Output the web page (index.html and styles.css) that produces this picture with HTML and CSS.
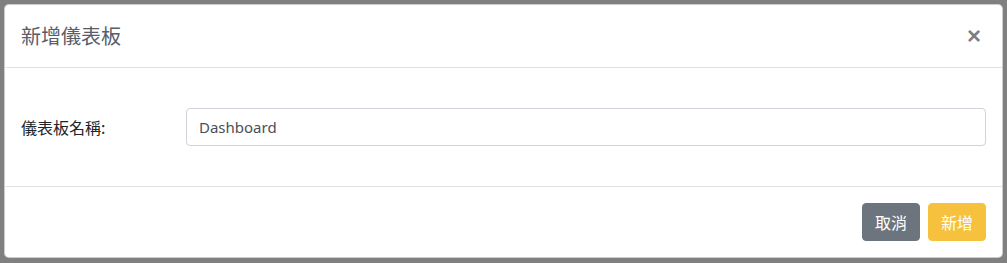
FILE: index.html
```html
<!DOCTYPE html>
<html lang="zh-Hant">
<head>
<meta charset="utf-8">
<title>新增儀表板</title>
<link rel="stylesheet" href="styles.css">
</head>
<body>
<div class="backdrop">
  <div class="modal">
    <div class="modal-header">
      <h5 class="modal-title">新增儀表板</h5>
      <button class="close" type="button" aria-label="Close">×</button>
    </div>
    <div class="modal-body">
      <div class="form-row">
        <label class="label">儀表板名稱:</label>
        <div class="field">
          <input class="input" type="text" value="Dashboard">
        </div>
      </div>
    </div>
    <div class="modal-footer">
      <button class="btn btn-secondary" type="button">取消</button>
      <button class="btn btn-warning" type="button">新增</button>
    </div>
  </div>
</div>
</body>
</html>
```

FILE: styles.css
```css
* { box-sizing: border-box; }
html, body {
  margin: 0;
  padding: 0;
  width: 1007px;
  height: 263px;
  overflow: hidden;
}
body {
  font-family: "Noto Sans", "Noto Sans CJK TC", sans-serif;
  font-size: 16px;
  color: #212529;
  background: #808080;
}
.backdrop {
  padding: 4px 4px;
  height: 263px;
}
.modal {
  width: 999px;
  background: #fff;
  border: 1px solid rgba(0, 0, 0, 0.2);
  border-radius: 5px;
  display: flex;
  flex-direction: column;
}
.modal-header {
  display: flex;
  align-items: center;
  justify-content: space-between;
  height: 63px;
  padding: 0 16px;
  border-bottom: 1px solid #dee2e6;
}
.modal-title {
  margin: 0;
  font-family: "Noto Sans CJK TC", sans-serif;
  font-size: 20px;
  font-weight: 400;
  line-height: 30px;
  color: #5a5c69;
}
.close {
  background: none;
  border: 0;
  padding: 0;
  margin: 0 5px 0 0;
  font-family: "Liberation Sans", sans-serif;
  font-size: 24px;
  font-weight: 700;
  line-height: 30px;
  color: #000;
  opacity: 0.5;
  cursor: pointer;
}
.modal-body {
  padding: 40px 16px 40px;
}
.form-row {
  display: flex;
  align-items: center;
}
.label {
  width: 165px;
  font-family: "Noto Sans CJK TC", sans-serif;
  font-size: 16px;
  line-height: 24px;
  color: #212529;
}
.field {
  flex: 1;
}
.input {
  display: block;
  width: 100%;
  height: 38px;
  padding: 6px 12px;
  border: 1px solid #ced4da;
  border-radius: 4px;
  font-family: "Noto Sans", sans-serif;
  font-size: 15px;
  color: #495057;
  background: #fff;
}
.modal-footer {
  display: flex;
  justify-content: flex-end;
  gap: 8px;
  padding: 16px;
  border-top: 1px solid #dee2e6;
}
.btn {
  height: 38px;
  padding: 0 12px;
  border: 1px solid transparent;
  border-radius: 4px;
  font-family: "Noto Sans CJK TC", sans-serif;
  font-size: 16px;
  line-height: 36px;
  color: #fff;
  cursor: pointer;
}
.btn-secondary {
  background: #6c757d;
  border-color: #6c757d;
}
.btn-warning {
  background: #f6c23e;
  border-color: #f6c23e;
}
```
